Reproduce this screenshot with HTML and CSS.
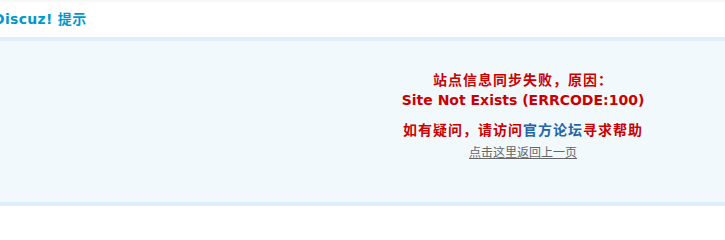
FILE: index.html
```html
<!DOCTYPE html>
<html lang="zh-CN">
<head>
<meta charset="utf-8">
<title>Discuz! 提示</title>
<link rel="stylesheet" href="styles.css">
</head>
<body>
<div class="container">
  <h3 class="title">Discuz! 提示</h3>
  <div class="infobox">
    <p class="infotitle3 cjk">站点信息同步失败，原因：<br><span class="latin">Site Not Exists (ERRCODE:100)</span></p>
    <p class="infotitle3 cjk">如有疑问，请访问<a class="bluelink" href="#">官方论坛</a>寻求帮助</p>
    <p class="back"><a class="lightlink" href="#">点击这里返回上一页</a></p>
  </div>
</div>
</body>
</html>
```

FILE: styles.css
```css
html, body {
  margin: 0;
  padding: 0;
  background: #fff;
  overflow: hidden;
}
body {
  border-top: 2px solid #f8f8f8;
  font: 12px/20px "DejaVu Sans", Verdana, "Noto Sans CJK SC", sans-serif;
  color: #000;
}
.container {
  width: 1046px;
}
.title {
  margin: 0;
  padding: 8px 0 9px;
  height: 18px;
  line-height: 18px;
  font-size: 14px;
  font-weight: bold;
  color: #0099cc;
  text-indent: -7px;
  font-family: "DejaVu Sans", "Noto Sans CJK SC", sans-serif;
  letter-spacing: 0.3px;
}
.infobox {
  border-top: 4px solid #deeefa;
  border-bottom: 4px solid #deeefa;
  background: #f2f9fd;
  text-align: center;
  padding: 28px 0 40px;
}
.infobox p {
  margin: 0;
}
.infotitle3 {
  color: #cc0000;
  font-size: 14px;
  font-weight: bold;
  line-height: 20px;
  margin-bottom: 10px !important;
}
.cjk {
  font-family: "Noto Sans CJK SC", sans-serif;
  letter-spacing: 1px;
}
.latin {
  font-family: "DejaVu Sans", Verdana, sans-serif;
  letter-spacing: 0;
  font-weight: bold;
  line-height: 18px;
}
.bluelink {
  color: #2366a8;
  text-decoration: none;
}
.back {
  font-family: "Noto Sans CJK SC", sans-serif;
  font-size: 12px;
  line-height: 20px;
  margin-top: -7px !important;
}
.lightlink {
  color: #666;
  text-decoration: underline;
}
```
